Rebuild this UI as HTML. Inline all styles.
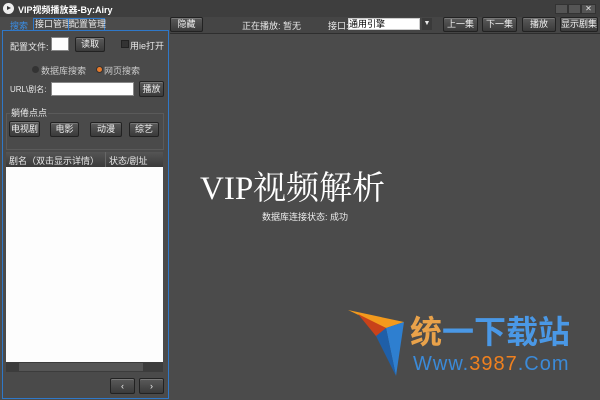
<!DOCTYPE html>
<html><head><meta charset="utf-8"><style>
*{margin:0;padding:0;box-sizing:border-box}
body{width:600px;height:400px;background:#4b4b4b;font-family:"Liberation Sans","Noto Sans CJK SC",sans-serif;font-size:9px;color:#e8e8e8;position:relative;overflow:hidden}
.a{position:absolute;white-space:nowrap}
.btn{position:absolute;white-space:nowrap;background:linear-gradient(#5a5a5a,#3a3a3a);border:1px solid #222;border-radius:2px;color:#eee;text-align:center;font-size:9px;box-shadow:inset 0 1px 0 #777;overflow:hidden}
.inp{position:absolute;background:#fff;border:1px solid #888}
</style></head><body>
<div class="a" style="left:0;top:0;width:600px;height:17px;background:#3e3e3e"></div>
<div class="a" style="left:3px;top:3px;width:11px;height:11px;border-radius:50%;background:#eee"></div>
<div class="a" style="left:7px;top:6px;width:0;height:0;border-left:4px solid #333;border-top:2.5px solid transparent;border-bottom:2.5px solid transparent"></div>
<div class="a" style="left:18px;top:3px;font-size:9px;color:#fff;font-weight:bold">VIP视频播放器-By:Airy</div>
<div class="a" style="left:555px;top:4px;width:13px;height:10px;background:#555;border:1px solid #333"></div>
<div class="a" style="left:568px;top:4px;width:13px;height:10px;background:#555;border:1px solid #333"></div>
<div class="a" style="left:581px;top:4px;width:15px;height:10px;background:#555;border:1px solid #333;font-size:8px;line-height:8px;text-align:center">✕</div>

<div class="a" style="left:2px;top:30px;width:167px;height:369px;border:1px solid #2f78c8;background:#4a4a4a"></div>
<div class="a" style="left:10px;top:19px;color:#3a8ee6">搜索</div>
<div class="a" style="left:33px;top:18px;width:36px;height:13px;border:1px solid #2f78c8;padding-left:1px;line-height:11px">接口管理</div>
<div class="a" style="left:68px;top:18px;width:37px;height:13px;border:1px solid #2f78c8;padding-left:1px;line-height:11px">配置管理</div>
<div class="a" style="left:10px;top:40px">配置文件:</div>
<div class="inp" style="left:51px;top:37px;width:18px;height:14px"></div>
<div class="btn" style="left:75px;top:37px;width:30px;height:15px;line-height:13px">读取</div>
<div class="a" style="left:121px;top:40px;width:8px;height:8px;background:#333;border:1px solid #222"></div>
<div class="a" style="left:130px;top:39px">用ie打开</div>
<div class="a" style="left:32px;top:66px;width:7px;height:7px;border-radius:50%;background:#333"></div>
<div class="a" style="left:41px;top:64px;font-size:9px;color:#ccc">数据库搜索</div>
<div class="a" style="left:96px;top:66px;width:7px;height:7px;border-radius:50%;background:#e87a2a;border:1px solid #333"></div>
<div class="a" style="left:104px;top:64px;font-size:9px;color:#ccc">网页搜索</div>
<div class="a" style="left:10px;top:84px;font-size:8px">URL\剧名:</div>
<div class="inp" style="left:51px;top:82px;width:83px;height:14px"></div>
<div class="btn" style="left:139px;top:81px;width:25px;height:16px;line-height:14px">播放</div>
<div class="a" style="left:6px;top:113px;width:158px;height:37px;border:1px solid #5a5a5a"></div>
<div class="a" style="left:10px;top:106px;background:#4a4a4a;padding:0 1px">躺倦点点</div>
<div class="btn" style="left:9px;top:121px;width:31px;height:16px;line-height:14px">电视剧</div>
<div class="btn" style="left:50px;top:122px;width:29px;height:15px;line-height:13px">电影</div>
<div class="btn" style="left:90px;top:122px;width:32px;height:15px;line-height:13px">动漫</div>
<div class="btn" style="left:129px;top:122px;width:30px;height:15px;line-height:13px">综艺</div>
<div class="a" style="left:6px;top:152px;width:157px;height:15px;background:linear-gradient(#555,#3a3a3a)"></div>
<div class="a" style="left:105px;top:152px;width:1px;height:15px;background:#666"></div>
<div class="a" style="left:9px;top:154px">剧名（双击显示详情）</div>
<div class="a" style="left:109px;top:154px">状态/剧址</div>
<div class="a" style="left:6px;top:167px;width:157px;height:195px;background:#fdfdfd"></div>
<div class="a" style="left:6px;top:362px;width:157px;height:10px;background:#3c3c3c"></div>
<div class="a" style="left:19px;top:363px;width:124px;height:8px;background:#555"></div>
<div class="btn" style="left:110px;top:378px;width:25px;height:16px;line-height:14px">‹</div>
<div class="btn" style="left:139px;top:378px;width:25px;height:16px;line-height:14px">›</div>

<div class="a" style="left:170px;top:17px;width:430px;height:17px;background:#454545;border-bottom:1px solid #2e2e2e"></div>
<div class="btn" style="left:170px;top:17px;width:33px;height:15px;line-height:13px">隐藏</div>
<div class="a" style="left:242px;top:19px">正在播放: 暂无</div>
<div class="a" style="left:328px;top:19px">接口:</div>
<div class="inp" style="left:348px;top:18px;width:72px;height:12px;color:#000;font-size:9px;line-height:10px;border-color:#ccc;overflow:hidden;white-space:nowrap">通用引擎</div>
<div class="a" style="left:422px;top:18px;width:10px;height:12px;background:#3a3a3a;font-size:7px;text-align:center;line-height:12px">▼</div>
<div class="btn" style="left:443px;top:17px;width:35px;height:15px;line-height:13px">上一集</div>
<div class="btn" style="left:482px;top:17px;width:35px;height:15px;line-height:13px">下一集</div>
<div class="btn" style="left:522px;top:17px;width:34px;height:15px;line-height:13px">播放</div>
<div class="btn" style="left:560px;top:17px;width:38px;height:15px;line-height:13px">显示剧集</div>

<div class="a" style="left:200px;top:169px;font-family:'Liberation Serif','Noto Serif CJK SC',serif;font-size:33px;color:#fff;line-height:40px">VIP视频解析</div>
<div class="a" style="left:262px;top:210px;font-size:9px;color:#eee">数据库连接状态: 成功</div>

<svg class="a" style="left:346px;top:308px" width="60" height="75">
<polygon points="2,2 58,14 40,20" fill="#f39a1c"/>
<polygon points="12,6 40,20 38,38" fill="#c8421a"/>
<polygon points="58,14 50,68 40,20" fill="#2e7fd0"/>
<polygon points="40,20 50,68 30,28" fill="#1f5fa8"/>
</svg>
<div class="a" style="left:410px;top:310px;font-size:32px;font-weight:bold;color:#e9a24a;font-family:'Noto Sans CJK SC',sans-serif;line-height:40px">统<span style="color:#4a98e6">一下载站</span></div>
<div class="a" style="left:413px;top:353px;font-size:20px;color:#3b8ad8;letter-spacing:1px">Www.<span style="color:#f0801e">3987</span>.Com</div>
</body></html>
